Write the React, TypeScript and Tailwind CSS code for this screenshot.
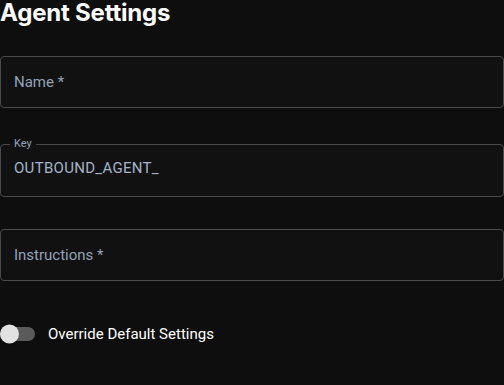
import React from "react";

export default function App() {
  return (
    <div className="w-[504px] h-[385px] overflow-hidden bg-[#0e0e0e] text-white" style={{ fontFamily: "Roboto, 'Liberation Sans', sans-serif" }}>
      <h1 className="text-[24px] font-bold leading-[25px] tracking-[-0.2px]" style={{ fontFamily: "Inter, 'Liberation Sans', sans-serif" }}>
        Agent Settings
      </h1>
      <div className="mt-[31px] flex flex-col">
        <div className="h-[52px] rounded-[4px] border border-[#4a4a4a] bg-[#111111] flex items-center px-[13px]">
          <span className="text-[15px] text-[#95a3b8]">Name *</span>
        </div>
        <fieldset className="mt-[29px] h-[60px] rounded-[4px] border border-[#4a4a4a] bg-[#111111] px-[13px] pb-[8px]">
          <legend className="px-[4px] -ml-[4px] text-[11px] leading-[14px] text-[#95a3b8]">Key</legend>
          <div className="pt-[6px] text-[15px] text-[#a6b4c8] tracking-[0.3px]">OUTBOUND_AGENT_</div>
        </fieldset>
        <div className="mt-[32px] h-[52px] rounded-[4px] border border-[#4a4a4a] bg-[#111111] flex items-center px-[13px]">
          <span className="text-[15px] text-[#95a3b8]">Instructions *</span>
        </div>
        <div className="mt-[43px] flex items-center h-[20px]">
          <div className="relative w-[35px] h-[14px] rounded-full bg-[#5a5a5a]">
            <div className="absolute left-0 top-1/2 -translate-y-1/2 w-[19px] h-[19px] rounded-full bg-[#e2e2e2] shadow" />
          </div>
          <span className="ml-[13px] text-[15px] text-white">Override Default Settings</span>
        </div>
      </div>
    </div>
  );
}
